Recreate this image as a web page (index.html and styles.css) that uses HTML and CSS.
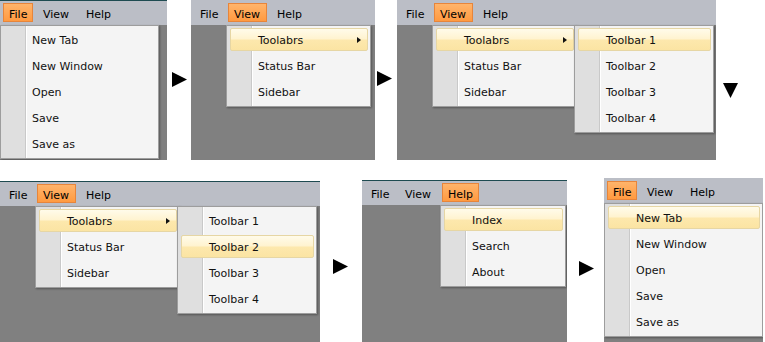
FILE: index.html
```html
<!DOCTYPE html>
<html lang="en">
<head>
    <meta charset="UTF-8">
    <title>Menu steps</title>
    <link rel="stylesheet" href="styles.css">
</head>
<body>

<div class="sheet">

    <div class="row">
        <div class="panel p1">
            <div class="topline"></div>
            <div class="menubar">
                <span class="mi mi-file open">File</span>
                <span class="mi mi-view">View</span>
                <span class="mi mi-help">Help</span>
            </div>
            <div class="drop drop-file">
                <div class="item">New Tab</div>
                <div class="item">New Window</div>
                <div class="item">Open</div>
                <div class="item">Save</div>
                <div class="item">Save as</div>
            </div>
        </div>

        <div class="go go-1">
            <svg width="15" height="15" viewBox="0 0 15 15"><polygon points="0,0 15,7.5 0,15"/></svg>
        </div>

        <div class="panel p2">
            <div class="topline plain"></div>
            <div class="menubar">
                <span class="mi mi-file">File</span>
                <span class="mi mi-view open">View</span>
                <span class="mi mi-help">Help</span>
            </div>
            <div class="drop drop-view">
                <div class="item hot">Toolabrs<span class="caret"></span></div>
                <div class="item">Status Bar</div>
                <div class="item">Sidebar</div>
            </div>
        </div>

        <div class="go go-2">
            <svg width="15" height="15" viewBox="0 0 15 15"><polygon points="0,0 15,7.5 0,15"/></svg>
        </div>

        <div class="panel p3">
            <div class="topline plain"></div>
            <div class="menubar">
                <span class="mi mi-file">File</span>
                <span class="mi mi-view open">View</span>
                <span class="mi mi-help">Help</span>
            </div>
            <div class="drop drop-view">
                <div class="item hot">Toolabrs<span class="caret"></span></div>
                <div class="item">Status Bar</div>
                <div class="item">Sidebar</div>
            </div>
            <div class="drop drop-bars">
                <div class="item hot">Toolbar 1</div>
                <div class="item">Toolbar 2</div>
                <div class="item">Toolbar 3</div>
                <div class="item">Toolbar 4</div>
            </div>
        </div>

        <div class="go go-down">
            <svg width="15" height="15" viewBox="0 0 15 15"><polygon points="0,0 15,0 7.5,15"/></svg>
        </div>
    </div>

    <div class="row row-bottom">
        <div class="panel p4">
            <div class="topline"></div>
            <div class="menubar">
                <span class="mi mi-file">File</span>
                <span class="mi mi-view open">View</span>
                <span class="mi mi-help">Help</span>
            </div>
            <div class="drop drop-view">
                <div class="item hot">Toolabrs<span class="caret"></span></div>
                <div class="item">Status Bar</div>
                <div class="item">Sidebar</div>
            </div>
            <div class="drop drop-bars">
                <div class="item">Toolbar 1</div>
                <div class="item hot">Toolbar 2</div>
                <div class="item">Toolbar 3</div>
                <div class="item">Toolbar 4</div>
            </div>
        </div>

        <div class="go go-3">
            <svg width="15" height="15" viewBox="0 0 15 15"><polygon points="0,0 15,7.5 0,15"/></svg>
        </div>

        <div class="panel p5">
            <div class="topline"></div>
            <div class="menubar">
                <span class="mi mi-file">File</span>
                <span class="mi mi-view">View</span>
                <span class="mi mi-help open">Help</span>
            </div>
            <div class="drop drop-help">
                <div class="item hot">Index</div>
                <div class="item">Search</div>
                <div class="item">About</div>
            </div>
        </div>

        <div class="go go-4">
            <svg width="15" height="15" viewBox="0 0 15 15"><polygon points="0,0 15,7.5 0,15"/></svg>
        </div>

        <div class="panel p6">
            <div class="topline plain"></div>
            <div class="menubar">
                <span class="mi mi-file open">File</span>
                <span class="mi mi-view">View</span>
                <span class="mi mi-help">Help</span>
            </div>
            <div class="drop drop-file">
                <div class="item hot">New Tab</div>
                <div class="item">New Window</div>
                <div class="item">Open</div>
                <div class="item">Save</div>
                <div class="item">Save as</div>
            </div>
        </div>
    </div>

</div>

</body>
</html>
```

FILE: styles.css
```css
body {
    margin: 0;
    font-family: "DejaVu Sans", Verdana, sans-serif;
    font-size: 11px;
    color: #111;
    background-color: #fff;
}

.sheet {
    width: 765px;
    height: 342px;
    overflow: hidden;
}

.row {
    display: flex;
    align-items: flex-start;
}

.row-bottom {
    margin-top: 18px;
}

/* each panel is one snapshot of the window */
.panel {
    position: relative;
    flex: none;
    overflow: hidden;
    background-color: #808080;
}

.p1 { width: 167px; height: 160px; }
.p2 { width: 184px; height: 160px; }
.p3 { width: 319px; height: 160px; }
.p4 { width: 320px; height: 161px; margin-top: 3px; }
.p5 { width: 205px; height: 162px; margin-top: 2px; }
.p6 { width: 159px; height: 164px; }

.topline {
    height: 1px;
    background-color: #1e4b51;
}

.topline.plain {
    background-color: #bbbec6;
}

.menubar {
    display: flex;
    gap: 4px;
    height: 24px;
    box-sizing: border-box;
    padding: 2px 0 0 3px;
    background-color: #bbbec6;
}

.mi {
    box-sizing: border-box;
    height: 19px;
    padding-left: 5px;
    border: 1px solid transparent;
    line-height: 21px;
    color: #000;
}

.mi-file { width: 30px; }
.mi-view { width: 39px; }
.mi-help { width: 37px; }

.mi.open {
    background: linear-gradient(#ffb46b, #ff9a40);
    border-color: #e7853a;
}

/* dropdowns */
.drop {
    position: absolute;
    top: 25px;
    box-sizing: border-box;
    padding: 1px;
    border: 1px solid #9d9d9d;
    background: linear-gradient(to right, #dfdfdf 24px, #c9c9c9 24px 25px, #ffffff 25px 26px, #f4f4f4 26px);
    box-shadow: 1px 1px 2px rgba(0, 0, 0, 0.35);
}

.drop-file { left: 0; width: 159px; }
.drop-view { left: 35px; width: 145px; }
.drop-help { left: 78px; width: 126px; }
.drop-bars { left: 177px; width: 140px; }

.item {
    position: relative;
    z-index: 0;
    height: 26px;
    padding-left: 30px;
    line-height: 28px;
    white-space: nowrap;
}

.item.hot::before {
    content: "";
    position: absolute;
    top: 1px;
    right: 1px;
    bottom: 2px;
    left: 2px;
    z-index: -1;
    border: 1px solid #e6d6a4;
    border-radius: 2px;
    background: linear-gradient(#fffbea, #fff3cf 48%, #fde8ad 52%, #fbe4a3);
}

.caret {
    position: absolute;
    top: 10px;
    right: 8px;
    width: 0;
    height: 0;
    border-left: 4px solid #111;
    border-top: 3.5px solid transparent;
    border-bottom: 3.5px solid transparent;
}

/* arrows between the snapshots */
.go {
    flex: none;
    box-sizing: border-box;
}

.go svg {
    display: block;
    fill: #000;
}

.go-1 { width: 24px; padding-left: 5px; margin-top: 72px; }
.go-2 { width: 22px; padding-left: 2px; margin-top: 71px; }
.go-down { padding-left: 7px; margin-top: 83px; }
.go-3 { width: 42px; padding-left: 13px; margin-top: 81px; }
.go-4 { width: 37px; padding-left: 12px; margin-top: 83px; }
```
